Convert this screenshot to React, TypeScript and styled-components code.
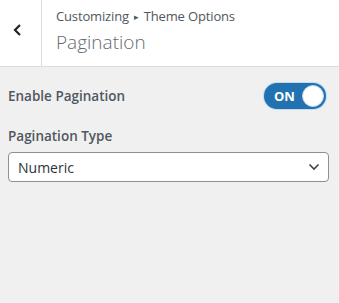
import styled, { createGlobalStyle } from 'styled-components'

const GlobalStyle = createGlobalStyle`
  html, body {
    margin: 0;
    padding: 0;
    background: #f0f0f1;
    font-family: "Open Sans", "Noto Sans", sans-serif;
  }
`

const Panel = styled.div`
  width: 339px;
  height: 303px;
  background: #f0f0f1;
  overflow: hidden;
`

const Header = styled.div`
  display: flex;
  height: 66px;
  background: #fff;
  border-bottom: 1px solid #dcdcde;
`

const BackButton = styled.div`
  width: 42px;
  flex: none;
  display: flex;
  align-items: center;
  justify-content: center;
  padding: 0 5px 6px 0;
  box-sizing: border-box;
  border-right: 1px solid #dcdcde;
`

const Titles = styled.div`
  display: flex;
  flex-direction: column;
  padding: 6px 0 0 14px;
`

const Crumbs = styled.div`
  font-size: 13px;
  color: #50575e;
  line-height: 20px;
  letter-spacing: -0.15px;
`

const Arrow = styled.span`
  font-size: 9px;
  margin: 0 5px;
  position: relative;
  top: -1px;
`

const Title = styled.div`
  font-size: 19px;
  font-weight: 300;
  color: #646970;
  line-height: 26px;
  margin-top: 1px;
`

const Body = styled.div`
  padding: 0 10px 0 8px;
`

const Row = styled.div`
  display: flex;
  align-items: center;
  justify-content: space-between;
  padding: 16px 0 0 0;
`

const Label = styled.div`
  font-size: 13.5px;
  font-weight: 600;
  color: #50575e;
`

const Toggle = styled.div`
  width: 62px;
  height: 26px;
  margin-right: 3px;
  border-radius: 13px;
  background: #2271b1;
  display: flex;
  align-items: center;
  justify-content: space-between;
  padding: 0 2px 0 10px;
  box-sizing: border-box;
  box-shadow: 0 0 0 1px #c5d9ea;
`

const ToggleText = styled.span`
  color: #fff;
  font-weight: 700;
  font-size: 13px;
`

const Knob = styled.span`
  width: 20px;
  height: 20px;
  border-radius: 50%;
  background: #fff;
  border: 1px solid #c3d4e6;
`

const Field = styled.div`
  margin-top: 18px;
`

const Select = styled.div`
  margin-top: 7px;
  height: 30px;
  width: 321px;
  box-sizing: border-box;
  border: 1px solid #8c8f94;
  border-radius: 4px;
  background: #fff;
  display: flex;
  align-items: center;
  justify-content: space-between;
  padding: 0 8px 0 9px;
  font-size: 14px;
  color: #2c3338;
`

export default function App() {
  return (
    <Panel>
      <GlobalStyle />
      <Header>
        <BackButton>
          <svg width="12" height="14" viewBox="0 0 12 14">
            <path d="M8 2 L3 7 L8 12" fill="none" stroke="#1d2327" strokeWidth="2.2" />
          </svg>
        </BackButton>
        <Titles>
          <Crumbs>
            Customizing<Arrow>▸</Arrow>Theme Options
          </Crumbs>
          <Title>Pagination</Title>
        </Titles>
      </Header>
      <Body>
        <Row>
          <Label>Enable Pagination</Label>
          <Toggle>
            <ToggleText>ON</ToggleText>
            <Knob />
          </Toggle>
        </Row>
        <Field>
          <Label>Pagination Type</Label>
          <Select>
            <span>Numeric</span>
            <svg width="12" height="8" viewBox="0 0 12 8">
              <path d="M1.5 1.5 L6 6 L10.5 1.5" fill="none" stroke="#3c434a" strokeWidth="1.6" />
            </svg>
          </Select>
        </Field>
      </Body>
    </Panel>
  )
}
